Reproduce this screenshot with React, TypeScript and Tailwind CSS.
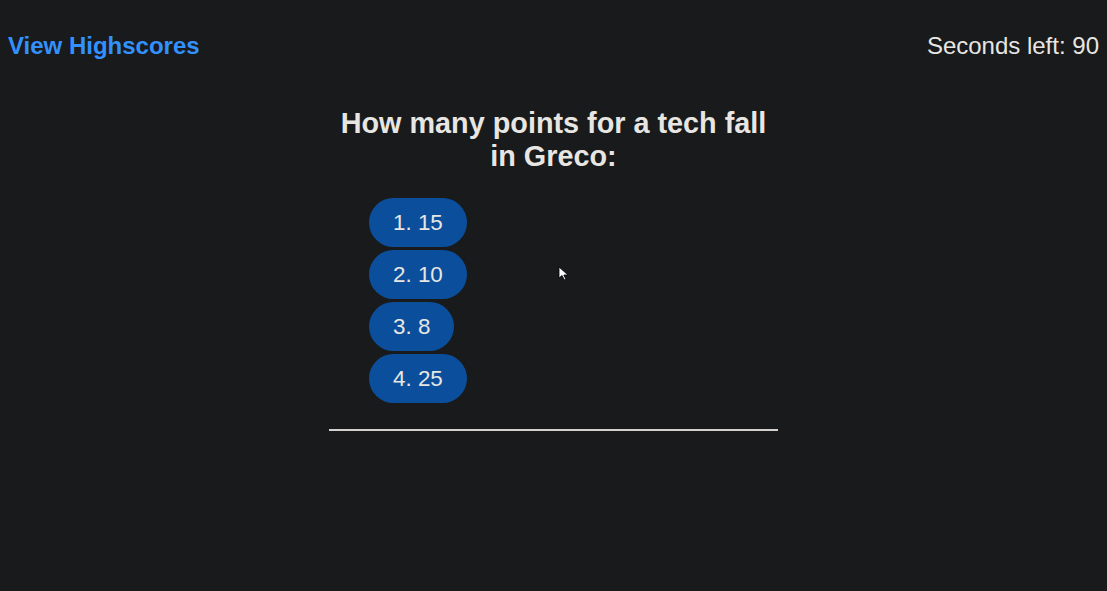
import React from "react";

// Quiz screen: header with highscores link + timer, a question, answer buttons.

const answers = ["1. 15", "2. 10", "3. 8", "4. 25"];

export default function App() {
  return (
    <div
      className="relative min-h-screen bg-[#181a1b] text-[#e8e6e3]"
      style={{ fontFamily: '"Liberation Sans", Arial, sans-serif' }}
    >
      <header className="flex items-start justify-between px-2 pt-[32px] text-[24px] leading-[27px]">
        <a href="#" className="font-bold text-[#3391ff]">
          View Highscores
        </a>
        <span>Seconds left: 90</span>
      </header>

      <main className="mx-auto mt-[48px] w-[449px]">
        <h2 className="px-[6px] text-center text-[28.8px] font-bold leading-[33px]">
          How many points for a tech fall in Greco:
        </h2>
        <ol className="mt-[25px] flex flex-col items-start gap-[3px] pl-[40px]">
          {answers.map((a) => (
            <li key={a}>
              <button
                type="button"
                className="h-[49px] rounded-full bg-[#0b4f9c] px-6 text-[22.4px] text-[#e8e6e3]"
              >
                {a}
              </button>
            </li>
          ))}
        </ol>
        <hr className="mt-[26px] border-t-2 border-[#d4d1cc]" />
      </main>

      {/* mouse pointer captured in the screenshot */}
      <svg
        className="absolute left-[558px] top-[266px]"
        width="12"
        height="15"
        viewBox="0 0 12 15"
      >
        <path d="M1 1 L1 12 L4 9.5 L6.5 14 L8 13.3 L5.8 9 L10 9 Z" fill="#fff" stroke="#000" strokeWidth="0.8" />
      </svg>
    </div>
  );
}
